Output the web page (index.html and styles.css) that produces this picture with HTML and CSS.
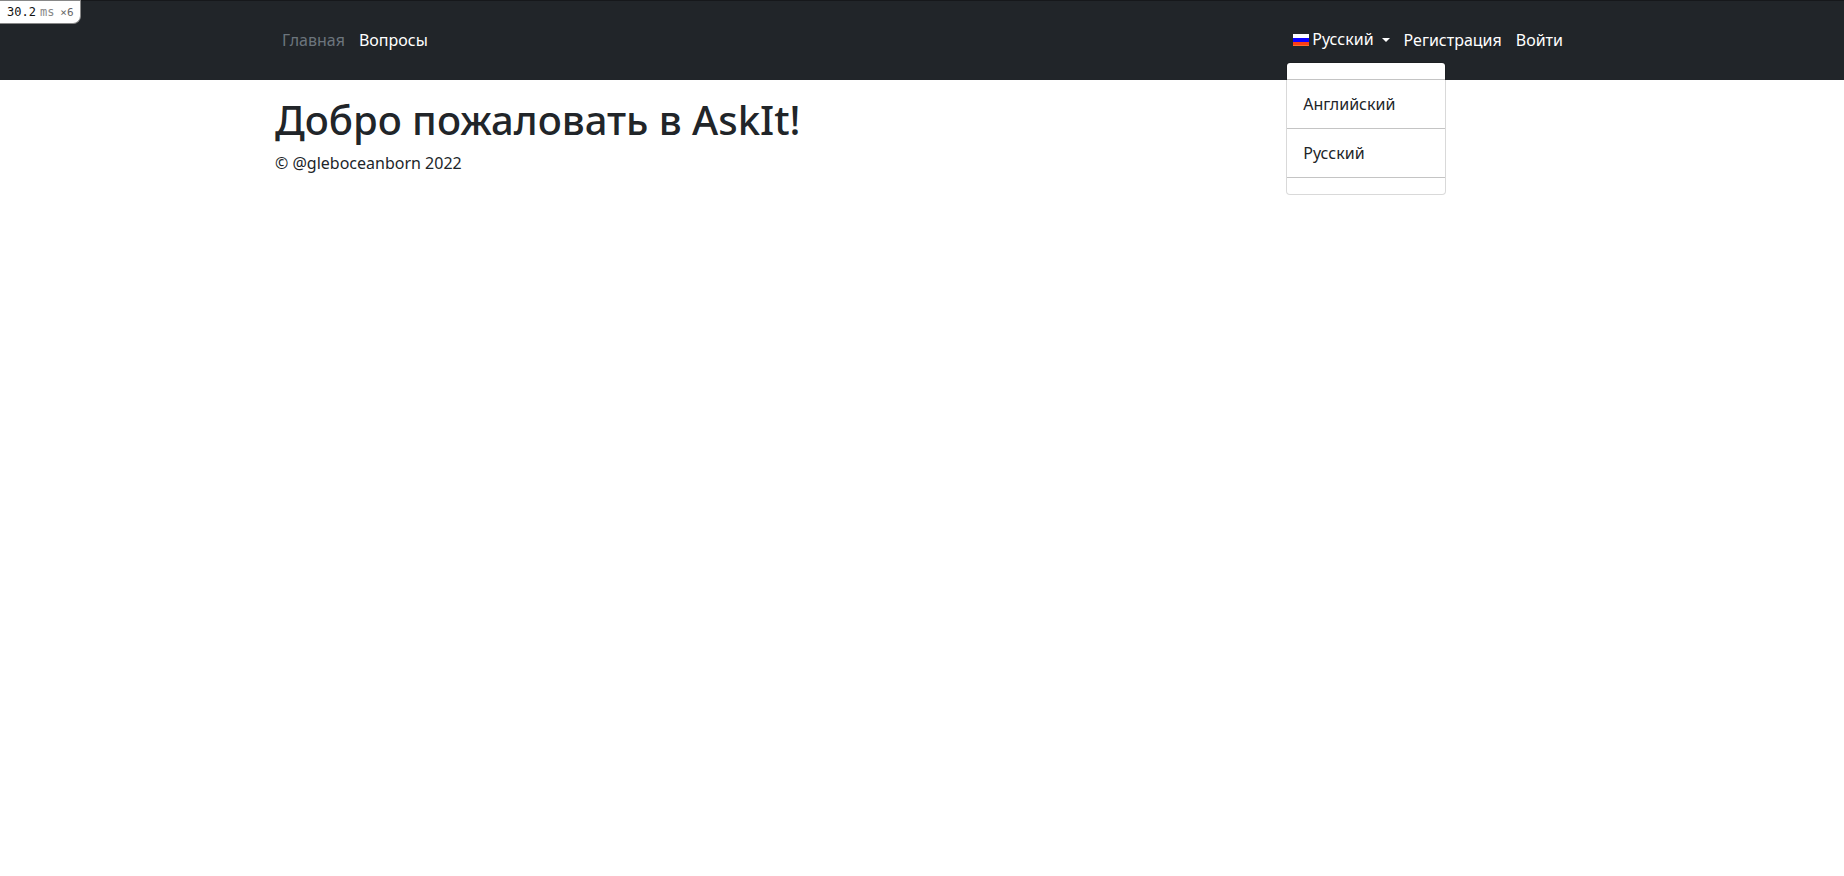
FILE: index.html
```html
<!DOCTYPE html>
<html lang="ru">
<head>
<meta charset="utf-8">
<meta name="viewport" content="width=device-width, initial-scale=1">
<title>AskIt</title>
<link rel="stylesheet" href="styles.css">
</head>
<body>
<div class="profiler"><span class="profiler-time">30.2</span><span class="profiler-unit">ms</span><span class="profiler-count">×6</span></div>
<header class="navbar">
  <nav class="container navbar-row">
    <ul class="nav">
      <li><a class="nav-link nav-link-current" href="#">Главная</a></li>
      <li><a class="nav-link" href="#">Вопросы</a></li>
    </ul>
    <ul class="nav">
      <li class="dropdown">
        <button class="nav-link dropdown-toggle" type="button" aria-expanded="true">
          <svg class="flag" viewBox="0 0 16 12" width="16" height="12" aria-hidden="true"><path fill="#fff" d="M0 0h16v4H0z"/><path fill="#0c00ff" d="M0 4h16v4H0z"/><path fill="#fb3d15" d="M0 8h16v4H0z"/><path fill="#ff6a2a" d="M0 11h16v1H0z"/></svg>
          <span>Русский</span>
          <span class="caret"></span>
        </button>
        <ul class="dropdown-menu">
          <li class="divider" role="separator"></li>
          <li><a class="dropdown-item" href="#">Английский</a></li>
          <li class="divider" role="separator"></li>
          <li><a class="dropdown-item" href="#">Русский</a></li>
          <li class="divider" role="separator"></li>
        </ul>
      </li>
      <li><a class="nav-link" href="#">Регистрация</a></li>
      <li><a class="nav-link" href="#">Войти</a></li>
    </ul>
  </nav>
</header>
<main class="container">
  <h1 class="title">Добро пожаловать в AskIt!</h1>
</main>
<footer class="container">© @gleboceanborn 2022</footer>
</body>
</html>
```
FILE: styles.css
```css
*, *::before, *::after { box-sizing: border-box; }
body {
  min-height: 100vh;
  margin: 0;
  background: #fff;
  color: #212529;
  font-family: "Noto Sans", "Open Sans", sans-serif;
  font-size: 16px;
  line-height: 24px;
}
ul { list-style: none; margin: 0; padding: 0; }
.container {
  width: 100%;
  max-width: 1320px;
  margin: 0 auto;
  padding: 0 12px 0 13px;
}
.navbar {
  margin-bottom: 16px;
  padding: 20px 0;
  background: #212529;
  border-top: 1px solid #16181b;
}
.navbar-row, .nav { display: flex; }
.navbar-row { justify-content: space-between; }
.nav-link {
  display: block;
  padding: 8px 7px;
  color: #fff;
  line-height: 23px;
  text-decoration: none;
}
.nav-link-current { color: #6c757d; }
.dropdown { position: relative; }
.dropdown-toggle {
  display: flex;
  align-items: center;
  padding-top: 7px;
  border: 0;
  background: none;
  font-family: inherit;
  font-size: inherit;
  cursor: pointer;
}
.flag { margin-right: 3px; }
.caret {
  margin-left: 8px;
  border-top: 4px solid;
  border-right: 4px solid transparent;
  border-left: 4px solid transparent;
}
.dropdown-menu {
  position: absolute;
  top: 100%;
  left: 0;
  z-index: 10;
  display: flex;
  flex-direction: column;
  min-width: 160px;
  margin-top: 2px;
  padding: 8px 0;
  background: #fff;
  background-clip: padding-box;
  border: 1px solid rgba(0, 0, 0, .15);
  border-radius: 4px;
}
.divider {
  margin: 8px 0;
  border-top: 1px solid #c4c4c4;
}
.dropdown-item {
  display: block;
  padding: 4px 16px;
  color: #212529;
  text-decoration: none;
}
.title {
  margin: 0 0 7px;
  font-size: 40px;
  font-weight: 500;
  line-height: 48px;
}
.profiler {
  position: absolute;
  top: 0;
  left: 0;
  z-index: 20;
  display: flex;
  align-items: baseline;
  padding: 4px 6px 3px 7px;
  background: #fff;
  border: 1px solid #888;
  border-width: 1px 1px 1px 0;
  border-bottom-right-radius: 8px;
  font-family: "DejaVu Sans Mono", monospace;
  font-size: 12px;
  line-height: 14px;
}
.profiler-time { color: #111; }
.profiler-unit { margin: 0 6px 0 4px; color: #888; }
.profiler-count { color: #666; font-size: 11px; }
```
